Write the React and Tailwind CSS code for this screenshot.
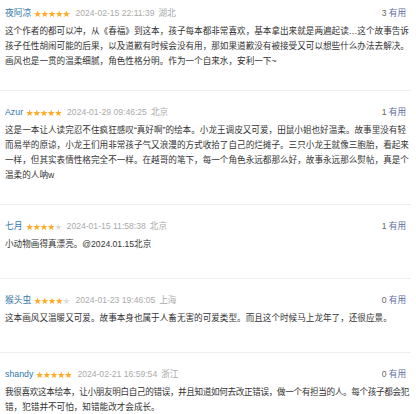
const REVIEWS = [
  {
    name: '夜阿凉',
    stars: 5,
    time: '2024-02-15 22:11:39',
    place: '湖北',
    useful: 3,
    lines: [
      '这个作者的都可以冲，从《春福》到这本，孩子每本都非常喜欢，基本拿出来就是两遍起读…这个故事告诉',
      '孩子任性胡闹可能的后果，以及道歉有时候会没有用，那如果道歉没有被接受又可以想些什么办法去解决。',
      '画风也是一贯的温柔细腻，角色性格分明。作为一个自来水，安利一下~',
    ],
  },
  {
    name: 'Azur',
    stars: 5,
    time: '2024-01-29 09:46:25',
    place: '北京',
    useful: 1,
    lines: [
      '这是一本让人读完忍不住疯狂感叹“真好啊”的绘本。小龙王调皮又可爱，田鼠小姐也好温柔。故事里没有轻',
      '而易举的原谅，小龙王们用非常孩子气又浪漫的方式收拾了自己的烂摊子。三只小龙王就像三胞胎，看起来',
      '一样，但其实表情性格完全不一样。在越哥的笔下，每一个角色永远都那么好，故事永远那么熨帖，真是个',
      '温柔的人呐w',
    ],
  },
  {
    name: '七月',
    stars: 4,
    time: '2024-01-15 11:58:38',
    place: '北京',
    useful: 1,
    lines: ['小动物画得真漂亮。@2024.01.15北京'],
  },
  {
    name: '猴头虫',
    stars: 4,
    time: '2024-01-23 19:46:05',
    place: '上海',
    useful: 0,
    lines: ['这本画风又温暖又可爱。故事本身也属于人畜无害的可爱类型。而且这个时候马上龙年了，还很应景。'],
  },
  {
    name: 'shandy',
    stars: 5,
    time: '2024-02-21 16:59:54',
    place: '浙江',
    useful: 0,
    tight: true,
    lines: [
      '我很喜欢这本绘本，让小朋友明白自己的错误，并且知道如何去改正错误，做一个有担当的人。每个孩子都会犯',
      '错，犯错并不可怕，知错能改才会成长。',
    ],
  },
]

const STAR = 'M3.6 0.3 L4.5 2.6 L7 2.7 L5.05 4.25 L5.75 6.7 L3.6 5.3 L1.45 6.7 L2.15 4.25 L0.2 2.7 L2.7 2.6 Z'

function Stars({ count }) {
  return (
    <svg width="36" height="8" viewBox="0 0 36 7.2" className="shrink-0">
      {[0, 1, 2, 3, 4].map((i) => (
        <path
          key={i}
          d={STAR}
          transform={`translate(${i * 7.2} 0)`}
          fill={i < count ? '#ffac2d' : '#dddddd'}
        />
      ))}
    </svg>
  )
}

function Review({ r, first }) {
  return (
    <div className={`border-b border-[#eeeeee] pb-[21px] ${first ? 'pt-[6px]' : 'pt-[14px]'}`}>
      <div className="flex items-center h-[15px] px-[5px]">
        <span className="text-[#3377aa] text-[8.8px]">{r.name}</span>
        <span className="ml-[3px]">
          <Stars count={r.stars} />
        </span>
        <span className="ml-[5px] text-[#aaaaaa]">{r.time}</span>
        <span className="ml-[4px] text-[#aaaaaa]">{r.place}</span>
        <span className="ml-auto text-[#666666]">
          {r.useful} <span className="text-[#5b6aa5]">有用</span>
        </span>
      </div>
      <div className="mt-[3px] min-h-[20px] px-[5px] text-[#333333]">
        {r.lines.map((l, i) => {
          const full = i < r.lines.length - 1
          return (
            <div
              key={i}
              className={`whitespace-nowrap h-[15px] leading-[15px] ${
                full ? 'text-justify [text-align-last:justify]' : ''
              } ${full && r.tight ? 'tracking-[-0.35px]' : ''}`}
            >
              {l}
            </div>
          )
        })}
      </div>
    </div>
  )
}

export default function App() {
  return (
    <div
      className="w-[416px] h-[414px] overflow-hidden bg-white text-[8.6px] leading-[15px]"
      style={{ fontFamily: '"Liberation Sans", "Noto Sans CJK SC", sans-serif' }}
    >
      <div className="mr-[5px]">
        {REVIEWS.map((r, i) => (
          <Review key={r.name} r={r} first={i === 0} />
        ))}
      </div>
    </div>
  )
}
